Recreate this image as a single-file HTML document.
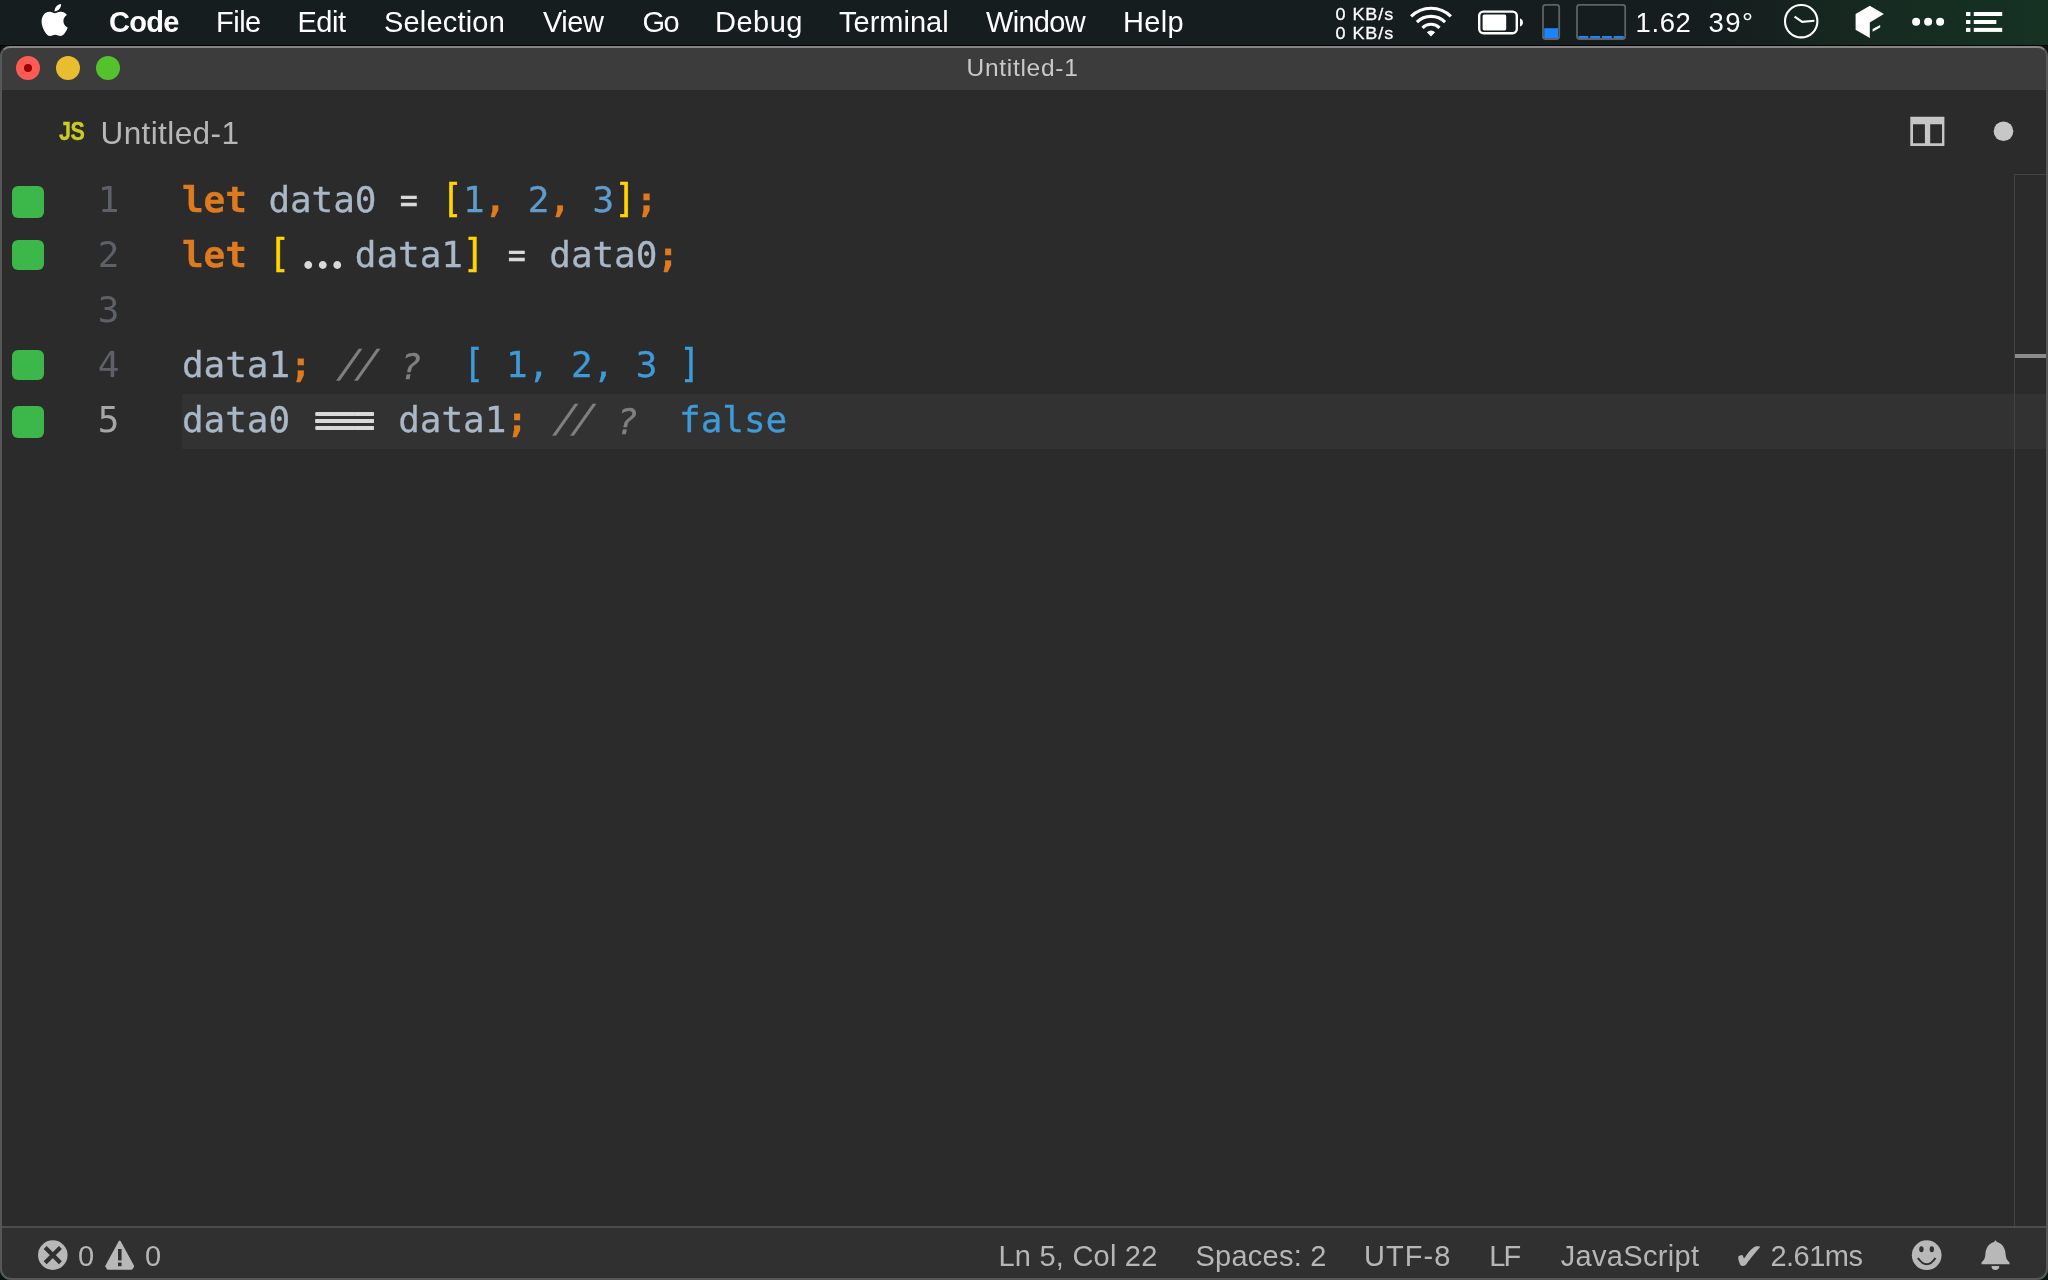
<!DOCTYPE html>
<html lang="en">
<head>
<meta charset="utf-8">
<title>Untitled-1</title>
<style>
*{box-sizing:border-box;margin:0;padding:0}
html,body{width:2048px;height:1280px;overflow:hidden;background:#08160f}
body{position:relative;font-family:"Liberation Sans",sans-serif;-webkit-font-smoothing:antialiased}
.abs{position:absolute;white-space:pre}
/* ---------- macOS menu bar ---------- */
#menubar{will-change:transform;position:absolute;left:0;top:0;width:2048px;height:46px;
  background:linear-gradient(90deg,#151d1e 0%,#151d1e 83%,#16221f 87%,#162b21 92%,#153223 100%);}
#menubar:after{content:"";position:absolute;left:0;right:0;top:44.6px;height:1.4px;background:#010201}
.mi{position:absolute;top:0px;height:44px;line-height:44px;font-size:29px;color:#fff;white-space:pre}
.mi.b{font-weight:bold}
.net{position:absolute;left:1335.5px;font-size:18px;line-height:18px;color:#fff;-webkit-text-stroke:0.3px #fff;white-space:pre;letter-spacing:.95px;transform-origin:0 0;transform:scaleY(.9)}
/* ---------- window ---------- */
#win{will-change:transform;position:absolute;left:1px;top:46px;width:2047px;height:1234px;background:#2b2b2b;border-radius:10px 10px 11px 11px;overflow:hidden;box-shadow:-1px 0 0 #575757}
#winedge{position:absolute;left:0;top:46px;width:2048px;height:1234px;border-radius:10px 10px 11px 11px;
  border:solid #575757;border-width:2px;border-top-color:#858585;pointer-events:none}
#titlebar{position:absolute;left:0;top:0;width:2047px;height:44px;background:#3c3c3c;border-top:2px solid #3c3c3c}
#title{position:absolute;left:-2px;width:2047px;top:-1px;height:42px;line-height:42px;text-align:center;font-size:24.5px;letter-spacing:.72px;color:#c9c9c9}
.tl{position:absolute;top:8px;width:24px;height:24px;border-radius:50%}
/* ---------- tabs ---------- */
#tabs{position:absolute;left:0;top:44px;width:2047px;height:84px;background:#2b2b2b}
#tabjs{left:58px;top:25.5px;font-size:25px;line-height:30px;font-weight:bold;color:#cbcb25;transform-origin:0 50%;transform:scaleX(.86);letter-spacing:-0.5px;-webkit-text-stroke:.4px #cbcb25}
#tabname{left:99.5px;top:21px;font-size:31.5px;line-height:44px;letter-spacing:.4px;color:#b7b7b7}
/* ---------- editor ---------- */
#editor{position:absolute;left:0;top:128px;width:2047px;height:1053px;background:#2b2b2b;
  font-family:"DejaVu Sans Mono","Liberation Mono",monospace;font-size:36px;line-height:55px;color:#a9b7c6}
.row{position:absolute;left:0;width:2013px;height:55px}
.row.cur:before{content:"";position:absolute;left:181px;top:0;right:-34px;height:55px;background:#323232}
.sq{position:absolute;left:11px;top:12px;width:32px;height:32px;border-radius:6px;background:#3cb84a}
.sq.s{top:11px;height:30px}
.ln{position:absolute;left:38.5px;width:80px;top:-2px;text-align:right;color:#5d6167;white-space:pre}
.row.cur .ln{color:#a4a6a8}
.code{position:absolute;left:181px;top:-2px;white-space:pre;letter-spacing:-0.07px;-webkit-text-stroke:.3px}
.k{color:#df7a1e;font-weight:bold}
.p{color:#df7a1e;font-weight:bold}
.o{color:#d9d9d9;display:inline-block;transform:scaleX(.84)}
.y{color:#ffd400;-webkit-text-stroke:.5px #ffd400}
.y,.br{display:inline-block;transform-origin:50% 31px;transform:translateY(-.8px) scaleY(1.085)}
.n{color:#5e9dcb}
.c{color:#808080;font-style:italic}
.q{color:#3d9bd9}
.dots{-webkit-text-stroke:0;font-family:"Liberation Serif",serif;font-weight:bold;font-size:48px;line-height:0;letter-spacing:2.45px;margin:0 9.15px 0 12.3px;position:relative;top:2px;color:#d9d9d9}
.sl{display:inline-block;width:43.2px;letter-spacing:-3.6px;text-indent:3px;transform-origin:0 44px;transform:skewX(-13deg) scaleY(1.067)}
.qm{position:relative;left:2px;top:1.5px}
.eq{-webkit-text-stroke:0;color:#d9d9d9;letter-spacing:-2.3px;margin:0 4.5px 0 2.4px;position:relative;top:-4px;text-shadow:1px 0 0 #d9d9d9,0 .5px 0 #d9d9d9,1px .5px 0 #d9d9d9,0 7.1px 0 #d9d9d9,1px 7.1px 0 #d9d9d9,0 7.6px 0 #d9d9d9,1px 7.6px 0 #d9d9d9}
#ruler{position:absolute;left:2013px;top:128px;width:34px;height:1053px;border-left:1px solid #424242;border-top:1px solid #424242}
#ruler i{position:absolute;left:0;right:0;top:179px;height:4px;background:#8b8b89}
/* ---------- status bar ---------- */
#status{position:absolute;left:0;top:1180px;width:2047px;height:54px;background:#303030;border-top:2px solid #4c4c4c;font-size:29px;color:#b6b6b6}
.st{position:absolute;top:6px;height:44px;line-height:44px;white-space:pre}
svg{position:absolute;overflow:visible}
</style>
</head>
<body>

<div id="menubar">
  <svg id="apple" style="left:42px;top:3.5px" width="26" height="32" viewBox="2.5 0 19.5 24"><path fill="#fff" d="M12.152 6.896c-.948 0-2.415-1.078-3.96-1.04-2.04.027-3.91 1.183-4.961 3.014-2.117 3.675-.546 9.103 1.519 12.09 1.013 1.454 2.208 3.09 3.792 3.039 1.52-.065 2.09-.987 3.935-.987 1.831 0 2.35.987 3.96.948 1.637-.026 2.676-1.48 3.676-2.948 1.156-1.688 1.636-3.325 1.662-3.415-.039-.013-3.182-1.221-3.22-4.857-.026-3.04 2.48-4.494 2.597-4.559-1.429-2.09-3.623-2.324-4.39-2.376-2-.156-3.675 1.09-4.61 1.09zM15.53 3.83c.843-1.012 1.4-2.427 1.245-3.83-1.207.052-2.662.805-3.532 1.818-.78.896-1.454 2.338-1.273 3.714 1.338.104 2.715-.688 3.559-1.701"/></svg>
  <svg id="mbicons" style="left:0;top:0" width="2048" height="46" viewBox="0 0 2048 46">
    <!-- wifi -->
    <g fill="none" stroke="#fff" stroke-width="3.1" stroke-linecap="butt">
      <path d="M1411.13 16.43 A28.1 28.1 0 0 1 1450.87 16.43"/>
      <path d="M1416.89 22.19 A19.95 19.95 0 0 1 1445.11 22.19"/>
      <path d="M1422.48 27.78 A12.05 12.05 0 0 1 1439.52 27.78"/>
    </g>
    <path fill="#fff" d="M1431 36.4 L1426.9 32.2 A5.8 5.8 0 0 1 1435.1 32.2 Z"/>
    <!-- battery -->
    <rect x="1479.2" y="11.6" width="37.6" height="21.6" rx="4.2" fill="none" stroke="#fff" stroke-width="2.4"/>
    <rect x="1482.6" y="14.4" width="23.6" height="16" rx="1.6" fill="#fff"/>
    <path fill="#fff" d="M1520 18.4 a4.2 4.2 0 0 1 0 8 z"/>
    <!-- memory -->
    <rect x="1543" y="4.8" width="16.2" height="34.2" rx="2.5" fill="none" stroke="#5f6363" stroke-width="1.8"/>
    <rect x="1544.2" y="28.2" width="13.8" height="9.8" fill="#1a84ff"/>
    <!-- cpu -->
    <rect x="1577" y="4.8" width="48.2" height="34.2" rx="2.5" fill="none" stroke="#5f6363" stroke-width="1.8"/>
    <g fill="#1a84ff"><rect x="1578.4" y="36" width="9.8" height="2.2"/><rect x="1590.2" y="36" width="9.8" height="2.2"/><rect x="1602" y="36" width="9.8" height="2.2"/><rect x="1613.8" y="36" width="10" height="2.2"/></g>
    <!-- clock -->
    <circle cx="1801.2" cy="21.2" r="16.2" fill="none" stroke="#fff" stroke-width="2.1"/>
    <path d="M1794.6 16.6 L1802.2 21.9 L1814.4 20.8" fill="none" stroke="#fff" stroke-width="2.1" stroke-linejoin="miter"/>
    <!-- cube -->
    <path fill="#fff" d="M1869.8 5.8 L1883.9 14 L1869.8 22.6 L1869.8 38 L1855.6 29.8 L1855.6 14 Z"/>
    <path fill="#fff" d="M1872.6 28.9 L1880.2 24.9 L1880.2 27.5 L1872.6 31.7 Z"/>
    <!-- dots -->
    <circle cx="1916.1" cy="21.8" r="4" fill="#fff"/><circle cx="1928.1" cy="21.8" r="4" fill="#fff"/><circle cx="1940.1" cy="21.8" r="4" fill="#fff"/>
    <!-- list -->
    <g fill="#fff"><rect x="1966" y="12" width="4.4" height="4"/><rect x="1973.8" y="12" width="28.4" height="4"/>
    <rect x="1966" y="20" width="4.4" height="4"/><rect x="1973.8" y="20" width="22.5" height="4"/>
    <rect x="1966" y="27.9" width="4.4" height="4"/><rect x="1973.8" y="27.9" width="28.4" height="4"/></g>
  </svg>
  <span class="mi b" id="m0" style="left:109px;letter-spacing:-0.67px">Code</span>
  <span class="mi" id="m1" style="left:216px;letter-spacing:-0.5px">File</span>
  <span class="mi" id="m2" style="left:297.5px;letter-spacing:-0.5px">Edit</span>
  <span class="mi" id="m3" style="left:384px;letter-spacing:0.19px">Selection</span>
  <span class="mi" id="m4" style="left:543px;letter-spacing:-0.5px">View</span>
  <span class="mi" id="m5" style="left:642.5px;letter-spacing:-1.5px">Go</span>
  <span class="mi" id="m6" style="left:715px;letter-spacing:0.5px">Debug</span>
  <span class="mi" id="m7" style="left:839px;letter-spacing:0px">Terminal</span>
  <span class="mi" id="m8" style="left:986px;letter-spacing:-0.7px">Window</span>
  <span class="mi" id="m9" style="left:1123px;letter-spacing:0.33px">Help</span>
  <span class="net" id="n1" style="top:6px">0 KB/s</span>
  <span class="net" id="n2" style="top:24.7px">0 KB/s</span>
  <span class="mi" id="m10" style="left:1635.5px;letter-spacing:0.6px;font-size:27.5px;top:1px">1.62</span>
  <span class="mi" id="m11" style="left:1708.5px;letter-spacing:1.4px;font-size:27.5px;top:1px">39°</span>
</div>

<div id="win">
  <div id="titlebar">
    <div class="tl" style="left:15px;background:#ff5b55"></div>
    <div class="tl" style="left:55px;background:#e9bd30"></div>
    <div class="tl" style="left:95px;background:#53c22c"></div>
    <div class="tl" style="left:23px;top:16px;width:8px;height:8px;background:#9a0000"></div>
    <div id="title">Untitled-1</div>
  </div>
  <div id="tabs">
    <svg id="tabicons" style="left:0;top:0" width="2047" height="84" viewBox="1 90 2047 84">
      <path fill="#c5c6c5" fill-rule="evenodd" d="M1910.3 116.8 H1944.4 V146.1 H1910.3 Z M1913 124.2 V143.2 H1924.9 V124.2 Z M1930.2 124.2 V143.2 H1942 V124.2 Z"/>
      <circle cx="2003.5" cy="131.3" r="9.8" fill="#c6c7c6"/>
    </svg>
    <span class="abs" id="tabjs">JS</span>
    <span class="abs" id="tabname">Untitled-1</span>
  </div>
  <div id="editor">
    <div class="row" style="top:0"><div class="sq"></div><span class="ln">1</span><span class="code" id="c1"><span class="k">let</span> data0 <span class="o">=</span> <span class="y">[</span><span class="n">1</span><span class="p">,</span> <span class="n">2</span><span class="p">,</span> <span class="n">3</span><span class="y">]</span><span class="p">;</span></span></div>
    <div class="row" style="top:55px"><div class="sq s"></div><span class="ln">2</span><span class="code" id="c2"><span class="k">let</span> <span class="y">[</span><span class="dots">...</span>data1<span class="y">]</span> <span class="o">=</span> data0<span class="p">;</span></span></div>
    <div class="row" style="top:110px"><span class="ln">3</span></div>
    <div class="row" style="top:165px"><div class="sq s"></div><span class="ln">4</span><span class="code" id="c4">data1<span class="p">;</span> <span class="c"><span class="sl">//</span> <span class="qm">?</span></span><span class="q">  <span class="br">[</span> 1, 2, 3 <span class="br">]</span></span></span></div>
    <div class="row cur" style="top:220px"><div class="sq"></div><span class="ln">5</span><span class="code" id="c5">data0 <span class="eq">===</span> data1<span class="p">;</span> <span class="c"><span class="sl">//</span> <span class="qm">?</span></span><span class="q">  false</span></span></div>
  </div>
  <div id="ruler"><i></i></div>
  <div id="status">
    <svg id="sticons" style="left:0;top:-2px" width="2047" height="54" viewBox="1 1226 2047 54">
      <!-- error -->
      <circle cx="52.8" cy="1255.1" r="14.8" fill="#b8b8b8"/>
      <path d="M45.2 1247.5 L60.4 1262.7 M60.4 1247.5 L45.2 1262.7" stroke="#303030" stroke-width="4.2" fill="none"/>
      <!-- warning -->
      <path fill="#b8b8b8" stroke="#b8b8b8" stroke-width="2" stroke-linejoin="round" d="M119.7 1241.6 L133.2 1266.3 L131.6 1268.8 L107.9 1268.8 L106.2 1266.3 Z"/>
      <rect x="118" y="1249" width="3.6" height="11.4" fill="#303030"/><rect x="118" y="1262.6" width="3.6" height="3.6" fill="#303030"/>
      <!-- smiley -->
      <circle cx="1926.7" cy="1255.2" r="14.85" fill="#b8b8b8"/>
      <ellipse cx="1921.4" cy="1249.3" rx="2.2" ry="3" fill="#303030"/><ellipse cx="1931.8" cy="1249.3" rx="2.2" ry="3" fill="#303030"/>
      <path d="M1917.9 1258 Q1926.7 1270.6 1935.5 1258" fill="none" stroke="#303030" stroke-width="2.1"/>
      <!-- bell -->
      <path fill="#b8b8b8" d="M1995.4 1240.2 l1.6 1.9 c5.6 1.6 8.3 6.3 8.6 12.2 c.2 3.4 1 5.6 3.9 8.3 v1.6 h-28 v-1.6 c2.9 -2.7 3.7 -4.9 3.9 -8.3 c.3 -5.9 3 -10.600 8.6 -12.200 z"/>
      <path fill="#b8b8b8" d="M1991.5 1266.100 h7.800 a3.900 3.900 0 0 1 -7.800 0 z"/>
    </svg>
    <span class="st" id="s0" style="left:77px;letter-spacing:0px">0</span>
    <span class="st" id="s1" style="left:144px;letter-spacing:0px">0</span>
    <span class="st" id="s2" style="left:997.5px;letter-spacing:0.22px">Ln 5, Col 22</span>
    <span class="st" id="s3" style="left:1194.5px;letter-spacing:0.25px">Spaces: 2</span>
    <span class="st" id="s4" style="left:1363px;letter-spacing:1.05px">UTF-8</span>
    <span class="st" id="s5" style="left:1488.3px;letter-spacing:-2px">LF</span>
    <span class="st" id="s6" style="left:1559.7px;letter-spacing:0.32px">JavaScript</span>
    <span class="st" id="s7" style="left:1732.5px;font-size:36px;top:6.5px">✔</span>
    <span class="st" id="s8" style="left:1769.4px;letter-spacing:-0.52px">2.61ms</span>
  </div>
</div>
<div id="winedge"></div>

</body>
</html>
